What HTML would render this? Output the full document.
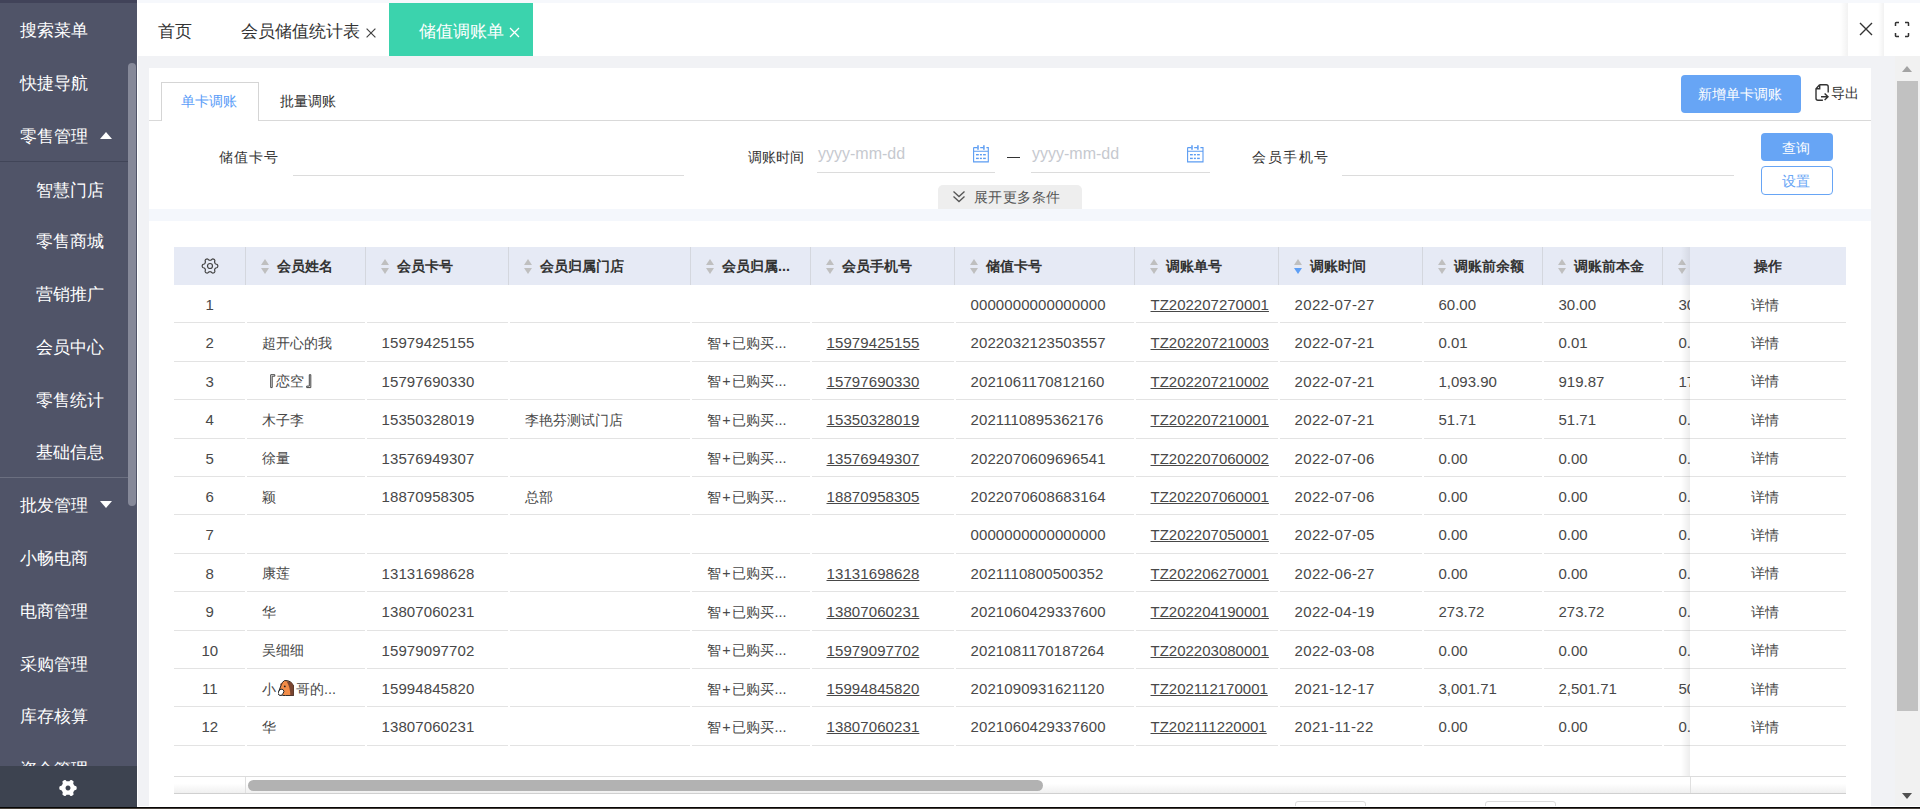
<!DOCTYPE html>
<html><head><meta charset="utf-8">
<style>
*{box-sizing:border-box;margin:0;padding:0}
html,body{width:1920px;height:809px;overflow:hidden;background:#f1f2f5;font-family:"Liberation Sans",sans-serif;color:#333}
.a{position:absolute}
.t{position:absolute;white-space:nowrap;line-height:1}
.mi{position:absolute;left:19.8px;font-size:16.8px;color:#fff;line-height:20px;white-space:nowrap}
.si{position:absolute;left:36px;font-size:16.8px;color:#fff;line-height:20px;white-space:nowrap}
.vb{width:1px;background:#d4d7de}
.hb{height:1px;background:#e3e3e3}
.th{position:absolute;top:247px;height:38px;line-height:38px;font-size:14.3px;font-weight:bold;color:#333;white-space:nowrap}
.td{position:absolute;height:38.4px;line-height:37.4px;padding-top:1px;font-size:15px;color:#484848;white-space:nowrap}
.c{text-align:center}
.u{text-decoration:underline}
.emo{display:inline-block;width:15px;height:16px;vertical-align:-3px;border-radius:7px 7px 2px 2px;background:#e07b39;margin:0 1px}
.shadow{width:9px;background:linear-gradient(to right,rgba(0,0,0,0),rgba(0,0,0,0.07))}
.lbl{position:absolute;font-size:14.3px;color:#333;line-height:1;white-space:nowrap}
.ph{position:absolute;font-size:16px;color:#c6c9cf;line-height:1;white-space:nowrap}
.ul{position:absolute;height:1px;background:#dcdcdc}

.cj{font-size:14.3px;padding-top:1.5px}

</style></head>
<body>
<!-- sidebar -->
<div class="a" style="left:0;top:0;width:137px;height:809px;background:#505468">
  <div class="a" style="left:0;top:0;width:137px;height:3px;background:#414359"></div>
  <div class="mi" style="top:21px">搜索菜单</div>
  <div class="mi" style="top:74px">快捷导航</div>
  <div class="mi" style="top:127px">零售管理</div>
  <div class="a" style="left:100px;top:132.4px;width:0;height:0;border-left:6.5px solid transparent;border-right:6.5px solid transparent;border-bottom:7.6px solid #fff"></div>
  <div class="a" style="left:0;top:161px;width:128px;height:1px;background:#414558"></div>
  <div class="si" style="top:181px">智慧门店</div>
  <div class="si" style="top:232px">零售商城</div>
  <div class="si" style="top:285px">营销推广</div>
  <div class="si" style="top:338px">会员中心</div>
  <div class="si" style="top:391px">零售统计</div>
  <div class="si" style="top:443px">基础信息</div>
  <div class="a" style="left:0;top:477px;width:128px;height:1px;background:#6b6f80"></div>
  <div class="mi" style="top:496px">批发管理</div>
  <div class="a" style="left:100px;top:501.3px;width:0;height:0;border-left:6.5px solid transparent;border-right:6.5px solid transparent;border-top:7.8px solid #fff"></div>
  <div class="mi" style="top:549px">小畅电商</div>
  <div class="mi" style="top:602px">电商管理</div>
  <div class="mi" style="top:655px">采购管理</div>
  <div class="mi" style="top:707px">库存核算</div>
  <div class="mi" style="top:760px">资金管理</div>
  <div class="a" style="left:128px;top:63px;width:8px;height:443px;border-radius:4px;background:#868999"></div>
  <div class="a" style="left:0;top:766px;width:137px;height:43px;background:#3d4350"></div>
  <svg class="a" style="left:59px;top:778.6px" width="18" height="18" viewBox="0 0 18 18"><path fill="#fff" fill-rule="evenodd" d="M17.70 9.00 L17.67 9.45 L17.59 9.90 L17.45 10.34 L17.22 10.75 L16.44 10.99 L15.65 11.16 L15.39 11.45 L15.18 11.75 L14.98 12.05 L14.80 12.35 L14.63 12.66 L14.47 12.97 L14.32 13.31 L14.20 13.68 L14.44 14.44 L14.62 15.24 L14.38 15.65 L14.08 15.99 L13.73 16.28 L13.35 16.53 L12.94 16.74 L12.51 16.89 L12.06 16.98 L11.60 16.99 L10.99 16.44 L10.45 15.84 L10.07 15.76 L9.71 15.72 L9.35 15.71 L9.00 15.70 L8.65 15.71 L8.29 15.72 L7.93 15.76 L7.55 15.84 L7.01 16.44 L6.40 16.99 L5.94 16.98 L5.49 16.89 L5.06 16.74 L4.65 16.53 L4.27 16.28 L3.92 15.99 L3.62 15.65 L3.38 15.24 L3.56 14.44 L3.80 13.68 L3.68 13.31 L3.53 12.97 L3.37 12.66 L3.20 12.35 L3.02 12.05 L2.82 11.75 L2.61 11.45 L2.35 11.16 L1.56 10.99 L0.78 10.75 L0.55 10.34 L0.41 9.90 L0.33 9.45 L0.30 9.00 L0.33 8.55 L0.41 8.10 L0.55 7.66 L0.78 7.25 L1.56 7.01 L2.35 6.84 L2.61 6.55 L2.82 6.25 L3.02 5.95 L3.20 5.65 L3.37 5.34 L3.53 5.03 L3.68 4.69 L3.80 4.32 L3.56 3.56 L3.38 2.76 L3.62 2.35 L3.92 2.01 L4.27 1.72 L4.65 1.47 L5.06 1.26 L5.49 1.11 L5.94 1.02 L6.40 1.01 L7.01 1.56 L7.55 2.16 L7.93 2.24 L8.29 2.28 L8.65 2.29 L9.00 2.30 L9.35 2.29 L9.71 2.28 L10.07 2.24 L10.45 2.16 L10.99 1.56 L11.60 1.01 L12.06 1.02 L12.51 1.11 L12.94 1.26 L13.35 1.47 L13.73 1.72 L14.08 2.01 L14.38 2.35 L14.62 2.76 L14.44 3.56 L14.20 4.32 L14.32 4.69 L14.47 5.03 L14.63 5.34 L14.80 5.65 L14.98 5.95 L15.18 6.25 L15.39 6.55 L15.65 6.84 L16.44 7.01 L17.22 7.25 L17.45 7.66 L17.59 8.10 L17.67 8.55Z M9 6.5 A2.5 2.5 0 1 0 9.001 6.5Z"/></svg>
</div>
<!-- top tabs -->
<div class="a" style="left:137px;top:0;width:1783px;height:3px;background:#f6f8fc"></div>
<div class="a" style="left:137px;top:3px;width:1783px;height:53px;background:#fff"></div>
<div class="t" style="left:158px;top:23.5px;font-size:16.8px;color:#333">首页</div>
<div class="t" style="left:241px;top:23.5px;font-size:16.8px;color:#333">会员储值统计表</div>
<svg class="a" style="left:365.5px;top:27.5px" width="10" height="10" viewBox="0 0 10 10"><path d="M0.6 0.6L9.4 9.4M9.4 0.6L0.6 9.4" stroke="#444" stroke-width="1.2"/></svg>
<div class="a" style="left:389px;top:3px;width:144px;height:53px;background:#3bd3ad"></div>
<div class="t" style="left:419px;top:23.5px;font-size:16.8px;color:#fff">储值调账单</div>
<svg class="a" style="left:509px;top:27px" width="11" height="11" viewBox="0 0 11 11"><path d="M1 1L10 10M10 1L1 10" stroke="#fff" stroke-width="1.3"/></svg>
<!-- right tab tools -->
<div class="a" style="left:1840px;top:3px;width:8px;height:53px;background:linear-gradient(to right,rgba(0,0,0,0),rgba(0,0,0,0.05))"></div>
<div class="a" style="left:1878px;top:3px;width:6px;height:53px;background:linear-gradient(to right,rgba(0,0,0,0),rgba(0,0,0,0.05))"></div>
<svg class="a" style="left:1859px;top:22px" width="14" height="14" viewBox="0 0 14 14"><path d="M1 1L13 13M13 1L1 13" stroke="#333" stroke-width="1.4"/></svg>
<svg class="a" style="left:1894px;top:21px" width="16" height="17" viewBox="0 0 16 17"><path d="M1.5 5V2.2Q1.5 1.5 2.2 1.5H5M11 1.5H13.8Q14.5 1.5 14.5 2.2V5M14.5 12V14.8Q14.5 15.5 13.8 15.5H11M5 15.5H2.2Q1.5 15.5 1.5 14.8V12" fill="none" stroke="#333" stroke-width="1.5"/></svg>

<!-- card -->
<div class="a" style="left:149px;top:68px;width:1722px;height:741px;background:#fff"></div>
<!-- card tabs -->
<div class="a" style="left:149px;top:120px;width:1722px;height:1px;background:#d9d9d9"></div>
<div class="a" style="left:161px;top:82px;width:98px;height:39px;background:#fff;border:1px solid #d5d5d5;border-bottom:none"></div>
<div class="t" style="left:181px;top:94px;font-size:14.3px;color:#5a9cf8">单卡调账</div>
<div class="t" style="left:280px;top:94px;font-size:14.3px;color:#333">批量调账</div>
<div class="a" style="left:1681px;top:75px;width:120px;height:38px;background:#67a5f5;border-radius:4px"></div>
<div class="t" style="left:1698px;top:87px;font-size:14.3px;color:#fff">新增单卡调账</div>
<svg class="a" style="left:1810px;top:80px" width="30" height="26" viewBox="0 0 30 26"><path d="M9.6 4.8H16.2Q18.2 4.8 18.2 6.8V12.5M12.9 20.3H8Q6 20.3 6 18.3V8.7L9.6 4.8M6.3 8.8H9.7V5M11 16.7H18M14.6 13.4L18 16.7L14.6 20" fill="none" stroke="#333" stroke-width="1.4"/></svg>
<div class="t" style="left:1831px;top:86px;font-size:14.3px;color:#333">导出</div>

<!-- search form -->
<div class="lbl" style="left:219px;top:150px;letter-spacing:1px">储值卡号</div>
<div class="ul" style="left:293px;top:175px;width:391px"></div>
<div class="lbl" style="left:748px;top:150px">调账时间</div>
<div class="ph" style="left:818px;top:146px">yyyy-mm-dd</div>
<div class="ul" style="left:817px;top:172px;width:178px"></div>
<svg class="a" style="left:968px;top:141px" width="26" height="26" viewBox="0 0 26 26"><g fill="none" stroke="#5b9cf2" stroke-width="1.1"><path d="M5.6 6.6V20.9H20.3V6.6H18.4M5.6 6.6H9.6M12.2 6.6H15.5M5.6 10.3H20.3"/></g><g stroke="#5b9cf2" stroke-width="1.5"><path d="M10 4.2V8.7M15.9 4.2V8.7"/></g><g fill="#5b9cf2"><rect x="8" y="13" width="2.8" height="1.4"/><rect x="11.9" y="13" width="2" height="1.4"/><rect x="15.1" y="13" width="2.7" height="1.4"/><rect x="8" y="16.7" width="2.8" height="1.4"/><rect x="11.9" y="16.7" width="2" height="1.4"/><rect x="15.1" y="16.7" width="2.7" height="1.4"/></g></svg>
<div class="a" style="left:1007px;top:157px;width:13px;height:1.4px;background:#333"></div>
<div class="ph" style="left:1032px;top:146px">yyyy-mm-dd</div>
<div class="ul" style="left:1031px;top:172px;width:179px"></div>
<svg class="a" style="left:1182px;top:141px" width="26" height="26" viewBox="0 0 26 26"><g fill="none" stroke="#5b9cf2" stroke-width="1.1"><path d="M5.6 6.6V20.9H21.0V6.6H18.4M5.6 6.6H9.6M12.2 6.6H15.5M5.6 10.3H21.0"/></g><g stroke="#5b9cf2" stroke-width="1.5"><path d="M10 4.2V8.7M15.9 4.2V8.7"/></g><g fill="#5b9cf2"><rect x="8" y="13" width="2.8" height="1.4"/><rect x="11.9" y="13" width="2" height="1.4"/><rect x="15.1" y="13" width="2.7" height="1.4"/><rect x="8" y="16.7" width="2.8" height="1.4"/><rect x="11.9" y="16.7" width="2" height="1.4"/><rect x="15.1" y="16.7" width="2.7" height="1.4"/></g></svg>
<div class="lbl" style="left:1252px;top:150px;letter-spacing:1.5px">会员手机号</div>
<div class="ul" style="left:1342px;top:175px;width:392px"></div>
<div class="a" style="left:1761px;top:133px;width:72px;height:28px;background:#67a5f5;border-radius:4px"></div>
<div class="t" style="left:1782px;top:141px;font-size:14.3px;color:#fff">查询</div>
<div class="a" style="left:1761px;top:166px;width:72px;height:29px;border:1px solid #67a5f5;border-radius:4px"></div>
<div class="t" style="left:1782px;top:174px;font-size:14.3px;color:#67a5f5">设置</div>
<div class="a" style="left:938px;top:185px;width:144px;height:24px;background:#eeeeee;border-radius:5px 5px 0 0"></div>
<svg class="a" style="left:952px;top:190px" width="14" height="13" viewBox="0 0 14 13"><path d="M1.5 1.5L7 6.5L12.5 1.5M1.5 6.5L7 11.5L12.5 6.5" fill="none" stroke="#555" stroke-width="1.3"/></svg>
<div class="t" style="left:974px;top:190px;font-size:14.3px;color:#555;letter-spacing:0.4px">展开更多条件</div>
<div class="a" style="left:149px;top:209px;width:1722px;height:12px;background:#f4f7fc"></div>
<div class="a" style="left:174px;top:247px;width:1672px;height:38px;background:#e6eaf5"></div>
<div class="a vb" style="left:245.0px;top:247px;height:38px"></div>
<div class="a vb" style="left:365.0px;top:247px;height:38px"></div>
<div class="a vb" style="left:508.0px;top:247px;height:38px"></div>
<div class="a vb" style="left:690.0px;top:247px;height:38px"></div>
<div class="a vb" style="left:810.0px;top:247px;height:38px"></div>
<div class="a vb" style="left:954.0px;top:247px;height:38px"></div>
<div class="a vb" style="left:1134.0px;top:247px;height:38px"></div>
<div class="a vb" style="left:1278.0px;top:247px;height:38px"></div>
<div class="a vb" style="left:1422.0px;top:247px;height:38px"></div>
<div class="a vb" style="left:1542.0px;top:247px;height:38px"></div>
<div class="a vb" style="left:1662.0px;top:247px;height:38px"></div>
<svg class="a" style="left:200.5px;top:257.3px" width="18" height="18" viewBox="0 0 18 18"><path d="M16.80 9.00 L16.74 9.51 L16.55 9.99 L16.23 10.44 L15.52 10.75 L14.81 10.97 L14.43 11.25 L14.15 11.54 L13.94 11.85 L13.78 12.19 L13.67 12.58 L13.61 13.04 L13.77 13.77 L13.86 14.54 L13.64 15.04 L13.31 15.45 L12.90 15.75 L12.43 15.96 L11.92 16.04 L11.37 15.98 L10.75 15.52 L10.20 15.01 L9.77 14.83 L9.38 14.73 L9.00 14.70 L8.62 14.73 L8.23 14.83 L7.80 15.01 L7.25 15.52 L6.63 15.98 L6.08 16.04 L5.57 15.96 L5.10 15.75 L4.69 15.45 L4.36 15.04 L4.14 14.54 L4.23 13.77 L4.39 13.04 L4.33 12.58 L4.22 12.19 L4.06 11.85 L3.85 11.54 L3.57 11.25 L3.19 10.97 L2.48 10.75 L1.77 10.44 L1.45 9.99 L1.26 9.51 L1.20 9.00 L1.26 8.49 L1.45 8.01 L1.77 7.56 L2.48 7.25 L3.19 7.03 L3.57 6.75 L3.85 6.46 L4.06 6.15 L4.22 5.81 L4.33 5.42 L4.39 4.96 L4.23 4.23 L4.14 3.46 L4.36 2.96 L4.69 2.55 L5.10 2.25 L5.57 2.04 L6.08 1.96 L6.63 2.02 L7.25 2.48 L7.80 2.99 L8.23 3.17 L8.62 3.27 L9.00 3.30 L9.38 3.27 L9.77 3.17 L10.20 2.99 L10.75 2.48 L11.37 2.02 L11.92 1.96 L12.43 2.04 L12.90 2.25 L13.31 2.55 L13.64 2.96 L13.86 3.46 L13.77 4.23 L13.61 4.96 L13.67 5.42 L13.78 5.81 L13.94 6.15 L14.15 6.46 L14.43 6.75 L14.81 7.03 L15.52 7.25 L16.23 7.56 L16.55 8.01 L16.74 8.49Z" fill="none" stroke="#444" stroke-width="1.2"/><circle cx="9" cy="9" r="2.5" fill="none" stroke="#444" stroke-width="1.2"/></svg>
<div class="a" style="left:260.5px;top:259px;width:0;height:0;border-left:4.8px solid transparent;border-right:4.8px solid transparent;border-bottom:6px solid #bfbfbf"></div>
<div class="a" style="left:260.5px;top:268px;width:0;height:0;border-left:4.8px solid transparent;border-right:4.8px solid transparent;border-top:6px solid #bfbfbf"></div>
<div class="th" style="left:277.0px">会员姓名</div>
<div class="a" style="left:380.5px;top:259px;width:0;height:0;border-left:4.8px solid transparent;border-right:4.8px solid transparent;border-bottom:6px solid #bfbfbf"></div>
<div class="a" style="left:380.5px;top:268px;width:0;height:0;border-left:4.8px solid transparent;border-right:4.8px solid transparent;border-top:6px solid #bfbfbf"></div>
<div class="th" style="left:397.0px">会员卡号</div>
<div class="a" style="left:523.5px;top:259px;width:0;height:0;border-left:4.8px solid transparent;border-right:4.8px solid transparent;border-bottom:6px solid #bfbfbf"></div>
<div class="a" style="left:523.5px;top:268px;width:0;height:0;border-left:4.8px solid transparent;border-right:4.8px solid transparent;border-top:6px solid #bfbfbf"></div>
<div class="th" style="left:540.0px">会员归属门店</div>
<div class="a" style="left:705.5px;top:259px;width:0;height:0;border-left:4.8px solid transparent;border-right:4.8px solid transparent;border-bottom:6px solid #bfbfbf"></div>
<div class="a" style="left:705.5px;top:268px;width:0;height:0;border-left:4.8px solid transparent;border-right:4.8px solid transparent;border-top:6px solid #bfbfbf"></div>
<div class="th" style="left:722.0px">会员归属...</div>
<div class="a" style="left:825.5px;top:259px;width:0;height:0;border-left:4.8px solid transparent;border-right:4.8px solid transparent;border-bottom:6px solid #bfbfbf"></div>
<div class="a" style="left:825.5px;top:268px;width:0;height:0;border-left:4.8px solid transparent;border-right:4.8px solid transparent;border-top:6px solid #bfbfbf"></div>
<div class="th" style="left:842.0px">会员手机号</div>
<div class="a" style="left:969.5px;top:259px;width:0;height:0;border-left:4.8px solid transparent;border-right:4.8px solid transparent;border-bottom:6px solid #bfbfbf"></div>
<div class="a" style="left:969.5px;top:268px;width:0;height:0;border-left:4.8px solid transparent;border-right:4.8px solid transparent;border-top:6px solid #bfbfbf"></div>
<div class="th" style="left:986.0px">储值卡号</div>
<div class="a" style="left:1149.5px;top:259px;width:0;height:0;border-left:4.8px solid transparent;border-right:4.8px solid transparent;border-bottom:6px solid #bfbfbf"></div>
<div class="a" style="left:1149.5px;top:268px;width:0;height:0;border-left:4.8px solid transparent;border-right:4.8px solid transparent;border-top:6px solid #bfbfbf"></div>
<div class="th" style="left:1166.0px">调账单号</div>
<div class="a" style="left:1293.5px;top:259px;width:0;height:0;border-left:4.8px solid transparent;border-right:4.8px solid transparent;border-bottom:6px solid #bfbfbf"></div>
<div class="a" style="left:1293.5px;top:268px;width:0;height:0;border-left:4.8px solid transparent;border-right:4.8px solid transparent;border-top:6px solid #5e9ff5"></div>
<div class="th" style="left:1310.0px">调账时间</div>
<div class="a" style="left:1437.5px;top:259px;width:0;height:0;border-left:4.8px solid transparent;border-right:4.8px solid transparent;border-bottom:6px solid #bfbfbf"></div>
<div class="a" style="left:1437.5px;top:268px;width:0;height:0;border-left:4.8px solid transparent;border-right:4.8px solid transparent;border-top:6px solid #bfbfbf"></div>
<div class="th" style="left:1454.0px">调账前余额</div>
<div class="a" style="left:1557.5px;top:259px;width:0;height:0;border-left:4.8px solid transparent;border-right:4.8px solid transparent;border-bottom:6px solid #bfbfbf"></div>
<div class="a" style="left:1557.5px;top:268px;width:0;height:0;border-left:4.8px solid transparent;border-right:4.8px solid transparent;border-top:6px solid #bfbfbf"></div>
<div class="th" style="left:1574.0px">调账前本金</div>
<div class="a" style="left:1677.5px;top:259px;width:0;height:0;border-left:4.8px solid transparent;border-right:4.8px solid transparent;border-bottom:6px solid #bfbfbf"></div>
<div class="a" style="left:1677.5px;top:268px;width:0;height:0;border-left:4.8px solid transparent;border-right:4.8px solid transparent;border-top:6px solid #bfbfbf"></div>
<div class="a hb" style="left:174.0px;top:322.0px;width:71.0px"></div>
<div class="a hb" style="left:247.0px;top:322.0px;width:118.0px"></div>
<div class="a hb" style="left:367.0px;top:322.0px;width:141.0px"></div>
<div class="a hb" style="left:510.0px;top:322.0px;width:180.0px"></div>
<div class="a hb" style="left:692.0px;top:322.0px;width:118.0px"></div>
<div class="a hb" style="left:812.0px;top:322.0px;width:142.0px"></div>
<div class="a hb" style="left:956.0px;top:322.0px;width:178.0px"></div>
<div class="a hb" style="left:1136.0px;top:322.0px;width:142.0px"></div>
<div class="a hb" style="left:1280.0px;top:322.0px;width:142.0px"></div>
<div class="a hb" style="left:1424.0px;top:322.0px;width:118.0px"></div>
<div class="a hb" style="left:1544.0px;top:322.0px;width:118.0px"></div>
<div class="a hb" style="left:1664.0px;top:322.0px;width:182.0px"></div>
<div class="td c" style="left:174px;width:71.5px;top:285.0px">1</div>
<div class="td" style="left:970.5px;top:285.0px;letter-spacing:0.1px;">0000000000000000</div>
<div class="td u" style="left:1150.5px;top:285.0px;">TZ202207270001</div>
<div class="td" style="left:1294.5px;top:285.0px;letter-spacing:0.35px;">2022-07-27</div>
<div class="td" style="left:1438.5px;top:285.0px;">60.00</div>
<div class="td" style="left:1558.5px;top:285.0px;">30.00</div>
<div class="td" style="left:1678.5px;top:285.0px;">30</div>
<div class="a hb" style="left:174.0px;top:361.0px;width:71.0px"></div>
<div class="a hb" style="left:247.0px;top:361.0px;width:118.0px"></div>
<div class="a hb" style="left:367.0px;top:361.0px;width:141.0px"></div>
<div class="a hb" style="left:510.0px;top:361.0px;width:180.0px"></div>
<div class="a hb" style="left:692.0px;top:361.0px;width:118.0px"></div>
<div class="a hb" style="left:812.0px;top:361.0px;width:142.0px"></div>
<div class="a hb" style="left:956.0px;top:361.0px;width:178.0px"></div>
<div class="a hb" style="left:1136.0px;top:361.0px;width:142.0px"></div>
<div class="a hb" style="left:1280.0px;top:361.0px;width:142.0px"></div>
<div class="a hb" style="left:1424.0px;top:361.0px;width:118.0px"></div>
<div class="a hb" style="left:1544.0px;top:361.0px;width:118.0px"></div>
<div class="a hb" style="left:1664.0px;top:361.0px;width:182.0px"></div>
<div class="td c" style="left:174px;width:71.5px;top:323.4px">2</div>
<div class="td cj" style="left:261.5px;top:323.4px;">超开心的我</div>
<div class="td" style="left:381.5px;top:323.4px;letter-spacing:0.1px;">15979425155</div>
<div class="td cj" style="left:706.5px;top:323.4px;">智<span style="margin:0 1.8px">+</span>已购买...</div>
<div class="td u" style="left:826.5px;top:323.4px;letter-spacing:0.1px;">15979425155</div>
<div class="td" style="left:970.5px;top:323.4px;letter-spacing:0.1px;">2022032123503557</div>
<div class="td u" style="left:1150.5px;top:323.4px;">TZ202207210003</div>
<div class="td" style="left:1294.5px;top:323.4px;letter-spacing:0.35px;">2022-07-21</div>
<div class="td" style="left:1438.5px;top:323.4px;">0.01</div>
<div class="td" style="left:1558.5px;top:323.4px;">0.01</div>
<div class="td" style="left:1678.5px;top:323.4px;">0.</div>
<div class="a hb" style="left:174.0px;top:399.0px;width:71.0px"></div>
<div class="a hb" style="left:247.0px;top:399.0px;width:118.0px"></div>
<div class="a hb" style="left:367.0px;top:399.0px;width:141.0px"></div>
<div class="a hb" style="left:510.0px;top:399.0px;width:180.0px"></div>
<div class="a hb" style="left:692.0px;top:399.0px;width:118.0px"></div>
<div class="a hb" style="left:812.0px;top:399.0px;width:142.0px"></div>
<div class="a hb" style="left:956.0px;top:399.0px;width:178.0px"></div>
<div class="a hb" style="left:1136.0px;top:399.0px;width:142.0px"></div>
<div class="a hb" style="left:1280.0px;top:399.0px;width:142.0px"></div>
<div class="a hb" style="left:1424.0px;top:399.0px;width:118.0px"></div>
<div class="a hb" style="left:1544.0px;top:399.0px;width:118.0px"></div>
<div class="a hb" style="left:1664.0px;top:399.0px;width:182.0px"></div>
<div class="td c" style="left:174px;width:71.5px;top:361.8px">3</div>
<div class="td cj" style="left:261.5px;top:361.8px;"><svg style="position:absolute;left:8px;top:12.3px" width="6" height="15" viewBox="0 0 6 15"><path d="M0.7 13.6V0.7H4.8V2.2H2.2V13.6Z" fill="none" stroke="#444" stroke-width="1"/></svg><span style="padding-left:14px">恋空</span><svg style="position:absolute;left:44px;top:12.3px" width="6" height="15" viewBox="0 0 6 15"><path d="M4.8 0.7V13.6H0.7V12.1H3.3V0.7Z" fill="none" stroke="#444" stroke-width="1"/></svg></div>
<div class="td" style="left:381.5px;top:361.8px;letter-spacing:0.1px;">15797690330</div>
<div class="td cj" style="left:706.5px;top:361.8px;">智<span style="margin:0 1.8px">+</span>已购买...</div>
<div class="td u" style="left:826.5px;top:361.8px;letter-spacing:0.1px;">15797690330</div>
<div class="td" style="left:970.5px;top:361.8px;letter-spacing:0.1px;">2021061170812160</div>
<div class="td u" style="left:1150.5px;top:361.8px;">TZ202207210002</div>
<div class="td" style="left:1294.5px;top:361.8px;letter-spacing:0.35px;">2022-07-21</div>
<div class="td" style="left:1438.5px;top:361.8px;">1,093.90</div>
<div class="td" style="left:1558.5px;top:361.8px;">919.87</div>
<div class="td" style="left:1678.5px;top:361.8px;">17</div>
<div class="a hb" style="left:174.0px;top:438.0px;width:71.0px"></div>
<div class="a hb" style="left:247.0px;top:438.0px;width:118.0px"></div>
<div class="a hb" style="left:367.0px;top:438.0px;width:141.0px"></div>
<div class="a hb" style="left:510.0px;top:438.0px;width:180.0px"></div>
<div class="a hb" style="left:692.0px;top:438.0px;width:118.0px"></div>
<div class="a hb" style="left:812.0px;top:438.0px;width:142.0px"></div>
<div class="a hb" style="left:956.0px;top:438.0px;width:178.0px"></div>
<div class="a hb" style="left:1136.0px;top:438.0px;width:142.0px"></div>
<div class="a hb" style="left:1280.0px;top:438.0px;width:142.0px"></div>
<div class="a hb" style="left:1424.0px;top:438.0px;width:118.0px"></div>
<div class="a hb" style="left:1544.0px;top:438.0px;width:118.0px"></div>
<div class="a hb" style="left:1664.0px;top:438.0px;width:182.0px"></div>
<div class="td c" style="left:174px;width:71.5px;top:400.2px">4</div>
<div class="td cj" style="left:261.5px;top:400.2px;">木子李</div>
<div class="td" style="left:381.5px;top:400.2px;letter-spacing:0.1px;">15350328019</div>
<div class="td cj" style="left:524.5px;top:400.2px;">李艳芬测试门店</div>
<div class="td cj" style="left:706.5px;top:400.2px;">智<span style="margin:0 1.8px">+</span>已购买...</div>
<div class="td u" style="left:826.5px;top:400.2px;letter-spacing:0.1px;">15350328019</div>
<div class="td" style="left:970.5px;top:400.2px;letter-spacing:0.1px;">2021110895362176</div>
<div class="td u" style="left:1150.5px;top:400.2px;">TZ202207210001</div>
<div class="td" style="left:1294.5px;top:400.2px;letter-spacing:0.35px;">2022-07-21</div>
<div class="td" style="left:1438.5px;top:400.2px;">51.71</div>
<div class="td" style="left:1558.5px;top:400.2px;">51.71</div>
<div class="td" style="left:1678.5px;top:400.2px;">0.</div>
<div class="a hb" style="left:174.0px;top:476.0px;width:71.0px"></div>
<div class="a hb" style="left:247.0px;top:476.0px;width:118.0px"></div>
<div class="a hb" style="left:367.0px;top:476.0px;width:141.0px"></div>
<div class="a hb" style="left:510.0px;top:476.0px;width:180.0px"></div>
<div class="a hb" style="left:692.0px;top:476.0px;width:118.0px"></div>
<div class="a hb" style="left:812.0px;top:476.0px;width:142.0px"></div>
<div class="a hb" style="left:956.0px;top:476.0px;width:178.0px"></div>
<div class="a hb" style="left:1136.0px;top:476.0px;width:142.0px"></div>
<div class="a hb" style="left:1280.0px;top:476.0px;width:142.0px"></div>
<div class="a hb" style="left:1424.0px;top:476.0px;width:118.0px"></div>
<div class="a hb" style="left:1544.0px;top:476.0px;width:118.0px"></div>
<div class="a hb" style="left:1664.0px;top:476.0px;width:182.0px"></div>
<div class="td c" style="left:174px;width:71.5px;top:438.6px">5</div>
<div class="td cj" style="left:261.5px;top:438.6px;">徐量</div>
<div class="td" style="left:381.5px;top:438.6px;letter-spacing:0.1px;">13576949307</div>
<div class="td cj" style="left:706.5px;top:438.6px;">智<span style="margin:0 1.8px">+</span>已购买...</div>
<div class="td u" style="left:826.5px;top:438.6px;letter-spacing:0.1px;">13576949307</div>
<div class="td" style="left:970.5px;top:438.6px;letter-spacing:0.1px;">2022070609696541</div>
<div class="td u" style="left:1150.5px;top:438.6px;">TZ202207060002</div>
<div class="td" style="left:1294.5px;top:438.6px;letter-spacing:0.35px;">2022-07-06</div>
<div class="td" style="left:1438.5px;top:438.6px;">0.00</div>
<div class="td" style="left:1558.5px;top:438.6px;">0.00</div>
<div class="td" style="left:1678.5px;top:438.6px;">0.</div>
<div class="a hb" style="left:174.0px;top:514.0px;width:71.0px"></div>
<div class="a hb" style="left:247.0px;top:514.0px;width:118.0px"></div>
<div class="a hb" style="left:367.0px;top:514.0px;width:141.0px"></div>
<div class="a hb" style="left:510.0px;top:514.0px;width:180.0px"></div>
<div class="a hb" style="left:692.0px;top:514.0px;width:118.0px"></div>
<div class="a hb" style="left:812.0px;top:514.0px;width:142.0px"></div>
<div class="a hb" style="left:956.0px;top:514.0px;width:178.0px"></div>
<div class="a hb" style="left:1136.0px;top:514.0px;width:142.0px"></div>
<div class="a hb" style="left:1280.0px;top:514.0px;width:142.0px"></div>
<div class="a hb" style="left:1424.0px;top:514.0px;width:118.0px"></div>
<div class="a hb" style="left:1544.0px;top:514.0px;width:118.0px"></div>
<div class="a hb" style="left:1664.0px;top:514.0px;width:182.0px"></div>
<div class="td c" style="left:174px;width:71.5px;top:477.0px">6</div>
<div class="td cj" style="left:261.5px;top:477.0px;">颖</div>
<div class="td" style="left:381.5px;top:477.0px;letter-spacing:0.1px;">18870958305</div>
<div class="td cj" style="left:524.5px;top:477.0px;">总部</div>
<div class="td cj" style="left:706.5px;top:477.0px;">智<span style="margin:0 1.8px">+</span>已购买...</div>
<div class="td u" style="left:826.5px;top:477.0px;letter-spacing:0.1px;">18870958305</div>
<div class="td" style="left:970.5px;top:477.0px;letter-spacing:0.1px;">2022070608683164</div>
<div class="td u" style="left:1150.5px;top:477.0px;">TZ202207060001</div>
<div class="td" style="left:1294.5px;top:477.0px;letter-spacing:0.35px;">2022-07-06</div>
<div class="td" style="left:1438.5px;top:477.0px;">0.00</div>
<div class="td" style="left:1558.5px;top:477.0px;">0.00</div>
<div class="td" style="left:1678.5px;top:477.0px;">0.</div>
<div class="a hb" style="left:174.0px;top:553.0px;width:71.0px"></div>
<div class="a hb" style="left:247.0px;top:553.0px;width:118.0px"></div>
<div class="a hb" style="left:367.0px;top:553.0px;width:141.0px"></div>
<div class="a hb" style="left:510.0px;top:553.0px;width:180.0px"></div>
<div class="a hb" style="left:692.0px;top:553.0px;width:118.0px"></div>
<div class="a hb" style="left:812.0px;top:553.0px;width:142.0px"></div>
<div class="a hb" style="left:956.0px;top:553.0px;width:178.0px"></div>
<div class="a hb" style="left:1136.0px;top:553.0px;width:142.0px"></div>
<div class="a hb" style="left:1280.0px;top:553.0px;width:142.0px"></div>
<div class="a hb" style="left:1424.0px;top:553.0px;width:118.0px"></div>
<div class="a hb" style="left:1544.0px;top:553.0px;width:118.0px"></div>
<div class="a hb" style="left:1664.0px;top:553.0px;width:182.0px"></div>
<div class="td c" style="left:174px;width:71.5px;top:515.4px">7</div>
<div class="td" style="left:970.5px;top:515.4px;letter-spacing:0.1px;">0000000000000000</div>
<div class="td u" style="left:1150.5px;top:515.4px;">TZ202207050001</div>
<div class="td" style="left:1294.5px;top:515.4px;letter-spacing:0.35px;">2022-07-05</div>
<div class="td" style="left:1438.5px;top:515.4px;">0.00</div>
<div class="td" style="left:1558.5px;top:515.4px;">0.00</div>
<div class="td" style="left:1678.5px;top:515.4px;">0.</div>
<div class="a hb" style="left:174.0px;top:591.0px;width:71.0px"></div>
<div class="a hb" style="left:247.0px;top:591.0px;width:118.0px"></div>
<div class="a hb" style="left:367.0px;top:591.0px;width:141.0px"></div>
<div class="a hb" style="left:510.0px;top:591.0px;width:180.0px"></div>
<div class="a hb" style="left:692.0px;top:591.0px;width:118.0px"></div>
<div class="a hb" style="left:812.0px;top:591.0px;width:142.0px"></div>
<div class="a hb" style="left:956.0px;top:591.0px;width:178.0px"></div>
<div class="a hb" style="left:1136.0px;top:591.0px;width:142.0px"></div>
<div class="a hb" style="left:1280.0px;top:591.0px;width:142.0px"></div>
<div class="a hb" style="left:1424.0px;top:591.0px;width:118.0px"></div>
<div class="a hb" style="left:1544.0px;top:591.0px;width:118.0px"></div>
<div class="a hb" style="left:1664.0px;top:591.0px;width:182.0px"></div>
<div class="td c" style="left:174px;width:71.5px;top:553.8px">8</div>
<div class="td cj" style="left:261.5px;top:553.8px;">康莲</div>
<div class="td" style="left:381.5px;top:553.8px;letter-spacing:0.1px;">13131698628</div>
<div class="td cj" style="left:706.5px;top:553.8px;">智<span style="margin:0 1.8px">+</span>已购买...</div>
<div class="td u" style="left:826.5px;top:553.8px;letter-spacing:0.1px;">13131698628</div>
<div class="td" style="left:970.5px;top:553.8px;letter-spacing:0.1px;">2021110800500352</div>
<div class="td u" style="left:1150.5px;top:553.8px;">TZ202206270001</div>
<div class="td" style="left:1294.5px;top:553.8px;letter-spacing:0.35px;">2022-06-27</div>
<div class="td" style="left:1438.5px;top:553.8px;">0.00</div>
<div class="td" style="left:1558.5px;top:553.8px;">0.00</div>
<div class="td" style="left:1678.5px;top:553.8px;">0.</div>
<div class="a hb" style="left:174.0px;top:630.0px;width:71.0px"></div>
<div class="a hb" style="left:247.0px;top:630.0px;width:118.0px"></div>
<div class="a hb" style="left:367.0px;top:630.0px;width:141.0px"></div>
<div class="a hb" style="left:510.0px;top:630.0px;width:180.0px"></div>
<div class="a hb" style="left:692.0px;top:630.0px;width:118.0px"></div>
<div class="a hb" style="left:812.0px;top:630.0px;width:142.0px"></div>
<div class="a hb" style="left:956.0px;top:630.0px;width:178.0px"></div>
<div class="a hb" style="left:1136.0px;top:630.0px;width:142.0px"></div>
<div class="a hb" style="left:1280.0px;top:630.0px;width:142.0px"></div>
<div class="a hb" style="left:1424.0px;top:630.0px;width:118.0px"></div>
<div class="a hb" style="left:1544.0px;top:630.0px;width:118.0px"></div>
<div class="a hb" style="left:1664.0px;top:630.0px;width:182.0px"></div>
<div class="td c" style="left:174px;width:71.5px;top:592.2px">9</div>
<div class="td cj" style="left:261.5px;top:592.2px;">华</div>
<div class="td" style="left:381.5px;top:592.2px;letter-spacing:0.1px;">13807060231</div>
<div class="td cj" style="left:706.5px;top:592.2px;">智<span style="margin:0 1.8px">+</span>已购买...</div>
<div class="td u" style="left:826.5px;top:592.2px;letter-spacing:0.1px;">13807060231</div>
<div class="td" style="left:970.5px;top:592.2px;letter-spacing:0.1px;">2021060429337600</div>
<div class="td u" style="left:1150.5px;top:592.2px;">TZ202204190001</div>
<div class="td" style="left:1294.5px;top:592.2px;letter-spacing:0.35px;">2022-04-19</div>
<div class="td" style="left:1438.5px;top:592.2px;">273.72</div>
<div class="td" style="left:1558.5px;top:592.2px;">273.72</div>
<div class="td" style="left:1678.5px;top:592.2px;">0.</div>
<div class="a hb" style="left:174.0px;top:668.0px;width:71.0px"></div>
<div class="a hb" style="left:247.0px;top:668.0px;width:118.0px"></div>
<div class="a hb" style="left:367.0px;top:668.0px;width:141.0px"></div>
<div class="a hb" style="left:510.0px;top:668.0px;width:180.0px"></div>
<div class="a hb" style="left:692.0px;top:668.0px;width:118.0px"></div>
<div class="a hb" style="left:812.0px;top:668.0px;width:142.0px"></div>
<div class="a hb" style="left:956.0px;top:668.0px;width:178.0px"></div>
<div class="a hb" style="left:1136.0px;top:668.0px;width:142.0px"></div>
<div class="a hb" style="left:1280.0px;top:668.0px;width:142.0px"></div>
<div class="a hb" style="left:1424.0px;top:668.0px;width:118.0px"></div>
<div class="a hb" style="left:1544.0px;top:668.0px;width:118.0px"></div>
<div class="a hb" style="left:1664.0px;top:668.0px;width:182.0px"></div>
<div class="td c" style="left:174px;width:71.5px;top:630.6px">10</div>
<div class="td cj" style="left:261.5px;top:630.6px;">吴细细</div>
<div class="td" style="left:381.5px;top:630.6px;letter-spacing:0.1px;">15979097702</div>
<div class="td cj" style="left:706.5px;top:630.6px;">智<span style="margin:0 1.8px">+</span>已购买...</div>
<div class="td u" style="left:826.5px;top:630.6px;letter-spacing:0.1px;">15979097702</div>
<div class="td" style="left:970.5px;top:630.6px;letter-spacing:0.1px;">2021081170187264</div>
<div class="td u" style="left:1150.5px;top:630.6px;">TZ202203080001</div>
<div class="td" style="left:1294.5px;top:630.6px;letter-spacing:0.35px;">2022-03-08</div>
<div class="td" style="left:1438.5px;top:630.6px;">0.00</div>
<div class="td" style="left:1558.5px;top:630.6px;">0.00</div>
<div class="td" style="left:1678.5px;top:630.6px;">0.</div>
<div class="a hb" style="left:174.0px;top:706.0px;width:71.0px"></div>
<div class="a hb" style="left:247.0px;top:706.0px;width:118.0px"></div>
<div class="a hb" style="left:367.0px;top:706.0px;width:141.0px"></div>
<div class="a hb" style="left:510.0px;top:706.0px;width:180.0px"></div>
<div class="a hb" style="left:692.0px;top:706.0px;width:118.0px"></div>
<div class="a hb" style="left:812.0px;top:706.0px;width:142.0px"></div>
<div class="a hb" style="left:956.0px;top:706.0px;width:178.0px"></div>
<div class="a hb" style="left:1136.0px;top:706.0px;width:142.0px"></div>
<div class="a hb" style="left:1280.0px;top:706.0px;width:142.0px"></div>
<div class="a hb" style="left:1424.0px;top:706.0px;width:118.0px"></div>
<div class="a hb" style="left:1544.0px;top:706.0px;width:118.0px"></div>
<div class="a hb" style="left:1664.0px;top:706.0px;width:182.0px"></div>
<div class="td c" style="left:174px;width:71.5px;top:669.0px">11</div>
<div class="td cj" style="left:261.5px;top:669.0px;">小<svg width="16" height="16" viewBox="0 0 16 16" style="display:inline-block;vertical-align:-2px;margin:0 2.5px 0 2px"><path d="M6.5 0.6Q13 0 15.6 6V15.6H7.5Q6 15.6 4.5 15.3Q0.2 15.8 0.5 12L3.2 5Q4 2 6.5 0.6Z" fill="#f28c48" stroke="#222" stroke-width="1"/><path d="M8.6 1.2Q14 1.5 15.6 6V15.6H12.3Q12.5 8 8.6 1.2Z" fill="#7a4530"/><path d="M4 3.6Q2.5 3.8 3 5.2" fill="none" stroke="#7a4530" stroke-width="1.2"/><ellipse cx="3" cy="12.3" rx="2.5" ry="3.4" transform="rotate(35 3 12.3)" fill="#fff" stroke="#222" stroke-width="0.9"/><circle cx="6.8" cy="6.4" r="0.9" fill="#222"/></svg>哥的...</div>
<div class="td" style="left:381.5px;top:669.0px;letter-spacing:0.1px;">15994845820</div>
<div class="td cj" style="left:706.5px;top:669.0px;">智<span style="margin:0 1.8px">+</span>已购买...</div>
<div class="td u" style="left:826.5px;top:669.0px;letter-spacing:0.1px;">15994845820</div>
<div class="td" style="left:970.5px;top:669.0px;letter-spacing:0.1px;">2021090931621120</div>
<div class="td u" style="left:1150.5px;top:669.0px;">TZ202112170001</div>
<div class="td" style="left:1294.5px;top:669.0px;letter-spacing:0.35px;">2021-12-17</div>
<div class="td" style="left:1438.5px;top:669.0px;">3,001.71</div>
<div class="td" style="left:1558.5px;top:669.0px;">2,501.71</div>
<div class="td" style="left:1678.5px;top:669.0px;">50</div>
<div class="a hb" style="left:174.0px;top:745.0px;width:71.0px"></div>
<div class="a hb" style="left:247.0px;top:745.0px;width:118.0px"></div>
<div class="a hb" style="left:367.0px;top:745.0px;width:141.0px"></div>
<div class="a hb" style="left:510.0px;top:745.0px;width:180.0px"></div>
<div class="a hb" style="left:692.0px;top:745.0px;width:118.0px"></div>
<div class="a hb" style="left:812.0px;top:745.0px;width:142.0px"></div>
<div class="a hb" style="left:956.0px;top:745.0px;width:178.0px"></div>
<div class="a hb" style="left:1136.0px;top:745.0px;width:142.0px"></div>
<div class="a hb" style="left:1280.0px;top:745.0px;width:142.0px"></div>
<div class="a hb" style="left:1424.0px;top:745.0px;width:118.0px"></div>
<div class="a hb" style="left:1544.0px;top:745.0px;width:118.0px"></div>
<div class="a hb" style="left:1664.0px;top:745.0px;width:182.0px"></div>
<div class="td c" style="left:174px;width:71.5px;top:707.4px">12</div>
<div class="td cj" style="left:261.5px;top:707.4px;">华</div>
<div class="td" style="left:381.5px;top:707.4px;letter-spacing:0.1px;">13807060231</div>
<div class="td cj" style="left:706.5px;top:707.4px;">智<span style="margin:0 1.8px">+</span>已购买...</div>
<div class="td u" style="left:826.5px;top:707.4px;letter-spacing:0.1px;">13807060231</div>
<div class="td" style="left:970.5px;top:707.4px;letter-spacing:0.1px;">2021060429337600</div>
<div class="td u" style="left:1150.5px;top:707.4px;">TZ202111220001</div>
<div class="td" style="left:1294.5px;top:707.4px;letter-spacing:0.35px;">2021-11-22</div>
<div class="td" style="left:1438.5px;top:707.4px;">0.00</div>
<div class="td" style="left:1558.5px;top:707.4px;">0.00</div>
<div class="td" style="left:1678.5px;top:707.4px;">0.</div>
<div class="a" style="left:1690px;top:285px;width:156px;height:460px;background:#fff"></div>
<div class="a" style="left:1690px;top:247px;width:156px;height:38px;background:#e6eaf5"></div>
<div class="a shadow" style="left:1681px;top:247px;height:529px"></div>
<div class="th" style="left:1690px;width:156px;text-align:center">操作</div>
<div class="a hb" style="left:1690px;top:322.0px;width:156px"></div>
<div class="td c cj" style="left:1687px;width:156px;top:285.0px">详情</div>
<div class="a hb" style="left:1690px;top:361.0px;width:156px"></div>
<div class="td c cj" style="left:1687px;width:156px;top:323.4px">详情</div>
<div class="a hb" style="left:1690px;top:399.0px;width:156px"></div>
<div class="td c cj" style="left:1687px;width:156px;top:361.8px">详情</div>
<div class="a hb" style="left:1690px;top:438.0px;width:156px"></div>
<div class="td c cj" style="left:1687px;width:156px;top:400.2px">详情</div>
<div class="a hb" style="left:1690px;top:476.0px;width:156px"></div>
<div class="td c cj" style="left:1687px;width:156px;top:438.6px">详情</div>
<div class="a hb" style="left:1690px;top:514.0px;width:156px"></div>
<div class="td c cj" style="left:1687px;width:156px;top:477.0px">详情</div>
<div class="a hb" style="left:1690px;top:553.0px;width:156px"></div>
<div class="td c cj" style="left:1687px;width:156px;top:515.4px">详情</div>
<div class="a hb" style="left:1690px;top:591.0px;width:156px"></div>
<div class="td c cj" style="left:1687px;width:156px;top:553.8px">详情</div>
<div class="a hb" style="left:1690px;top:630.0px;width:156px"></div>
<div class="td c cj" style="left:1687px;width:156px;top:592.2px">详情</div>
<div class="a hb" style="left:1690px;top:668.0px;width:156px"></div>
<div class="td c cj" style="left:1687px;width:156px;top:630.6px">详情</div>
<div class="a hb" style="left:1690px;top:706.0px;width:156px"></div>
<div class="td c cj" style="left:1687px;width:156px;top:669.0px">详情</div>
<div class="a hb" style="left:1690px;top:745.0px;width:156px"></div>
<div class="td c cj" style="left:1687px;width:156px;top:707.4px">详情</div>
<!-- horizontal scroll area -->
<div class="a" style="left:174px;top:776px;width:1672px;height:1px;background:#dcdcdc"></div>
<div class="a" style="left:174px;top:793px;width:1672px;height:1px;background:#d0d0d0"></div>
<div class="a" style="left:174px;top:777px;width:1672px;height:16px;background:linear-gradient(to bottom,#fff 40%,#f0f0f0)"></div>
<div class="a" style="left:245px;top:777px;width:1px;height:16px;background:#e0e0e0"></div>
<div class="a" style="left:1690px;top:777px;width:1px;height:16px;background:#e0e0e0"></div>
<div class="a" style="left:248px;top:780px;width:795px;height:11px;border-radius:5.5px;background:#b2b2b2"></div>
<!-- pager partial -->
<div class="a" style="left:1295px;top:801px;width:71px;height:12px;border:1px solid #dcdcdc;border-radius:3px"></div>
<div class="a" style="left:1485px;top:801px;width:71px;height:12px;border:1px solid #dcdcdc;border-radius:3px"></div>
<!-- vertical page scrollbar -->
<div class="a" style="left:1895px;top:56px;width:25px;height:753px;background:#f1f1f1"></div>
<div class="a" style="left:1902px;top:66px;width:0;height:0;border-left:5.7px solid transparent;border-right:5.7px solid transparent;border-bottom:6px solid #a3a3a3"></div>
<div class="a" style="left:1897px;top:81px;width:21px;height:630px;background:#c1c1c1"></div>
<div class="a" style="left:1902px;top:792.5px;width:0;height:0;border-left:5.8px solid transparent;border-right:5.8px solid transparent;border-top:6.3px solid #505050"></div>
<!-- bottom dark line -->
<div class="a" style="left:137px;top:0;width:1px;height:807px;background:#fff"></div>
<div class="a" style="left:137px;top:806px;width:1783px;height:1px;background:#fff"></div>
<div class="a" style="left:0;top:807px;width:1920px;height:1px;background:#070707"></div>
<div class="a" style="left:0;top:808px;width:1920px;height:1px;background:#463f38"></div>
</body></html>
